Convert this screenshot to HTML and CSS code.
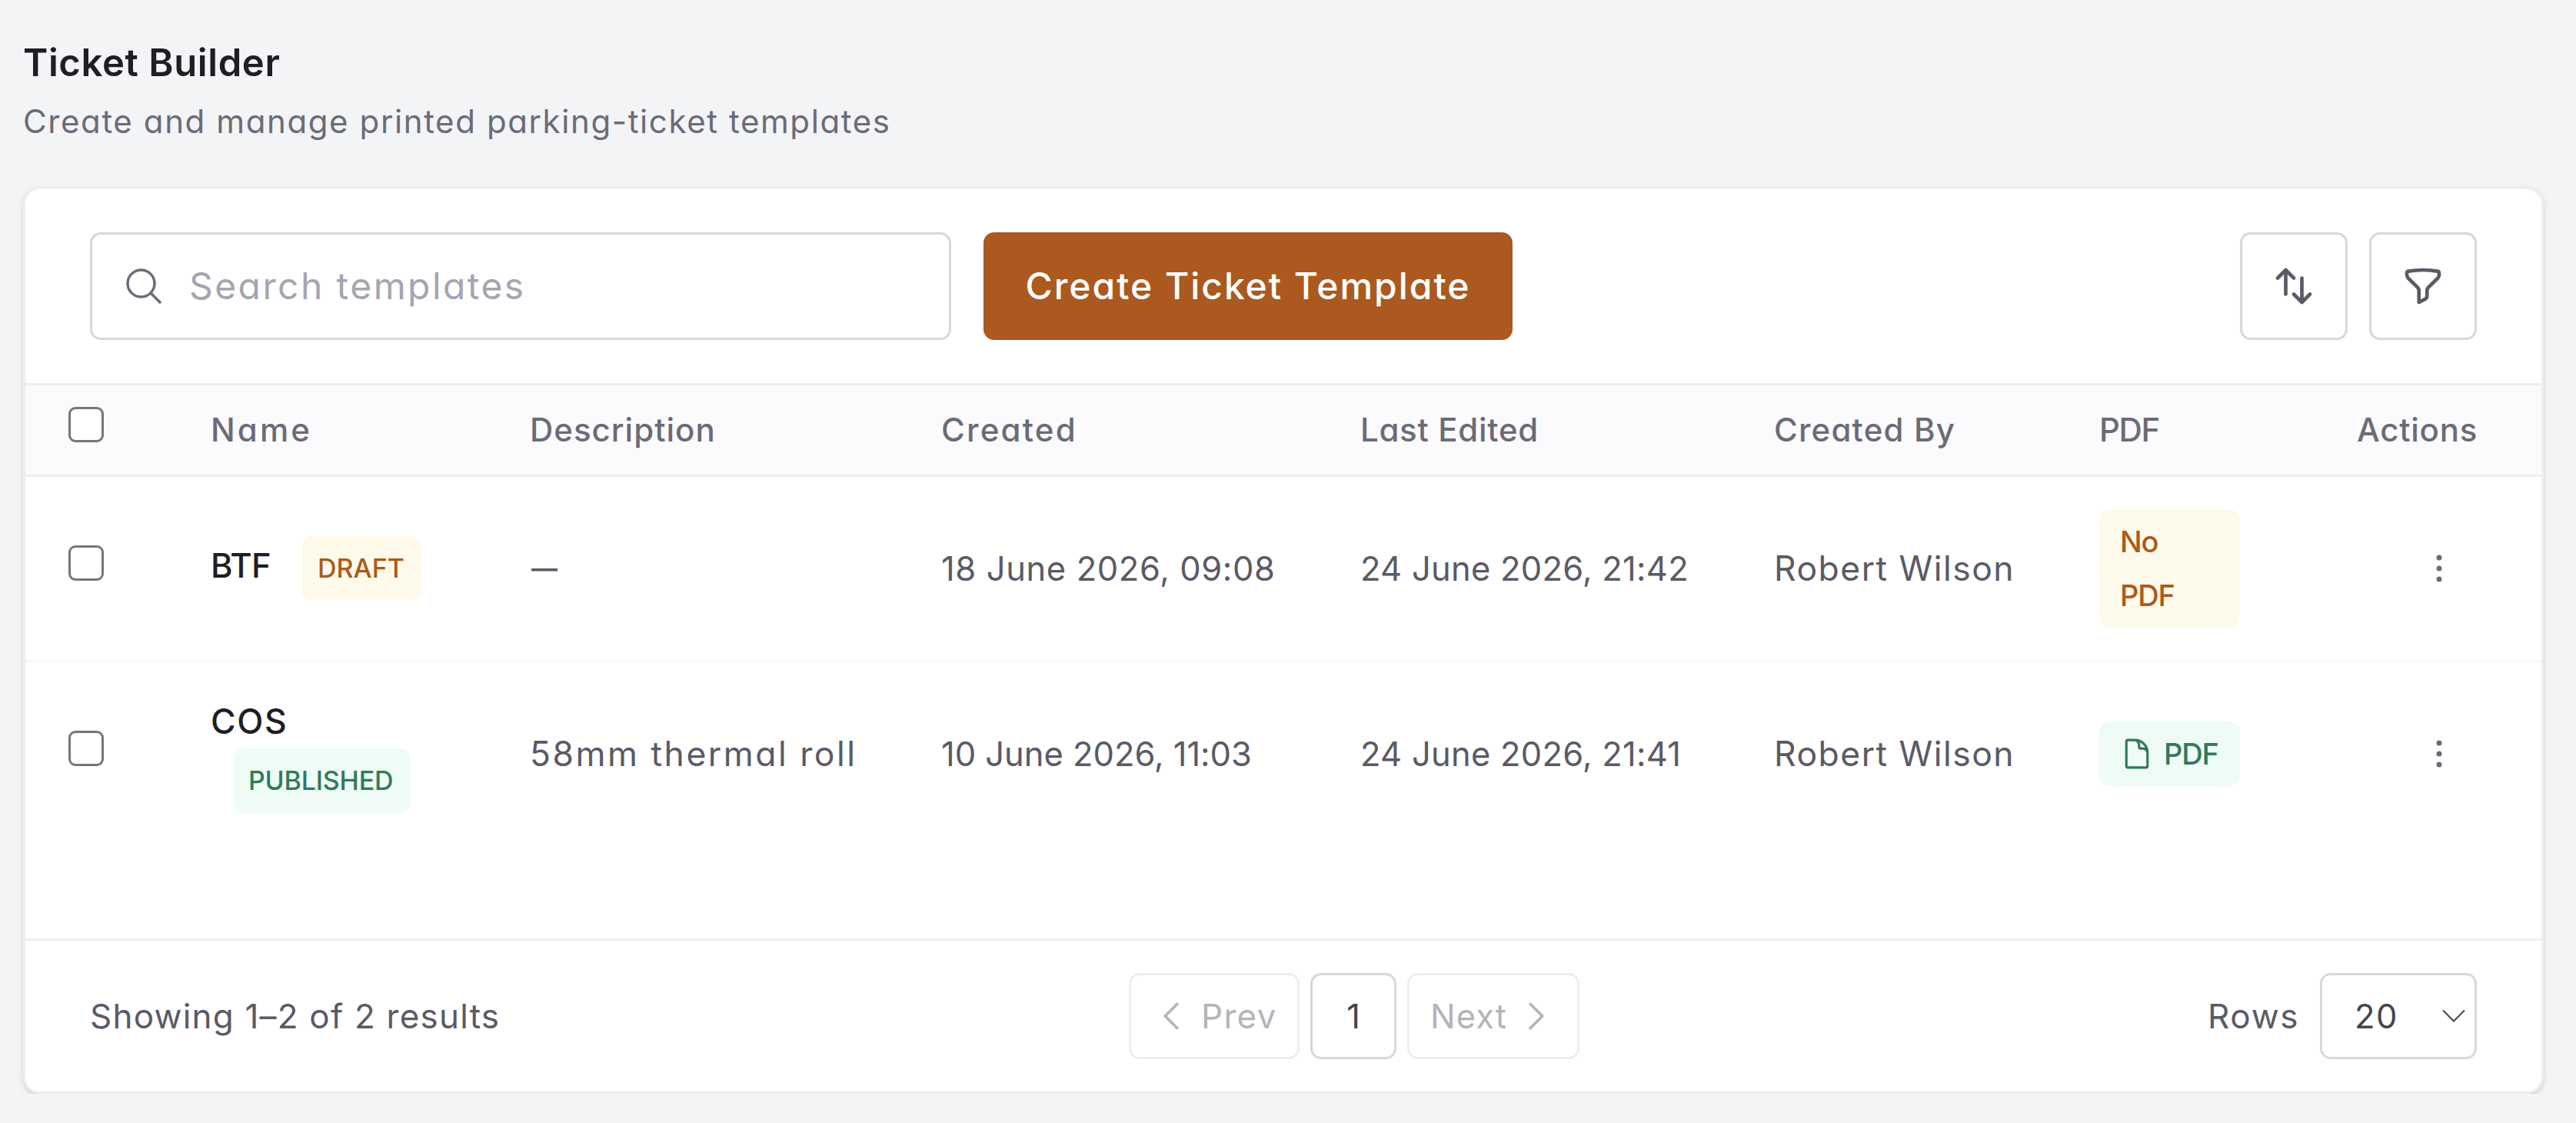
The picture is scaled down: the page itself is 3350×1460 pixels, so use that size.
FILE: index.html
```html
<!DOCTYPE html>
<html lang="en">
<head>
<meta charset="utf-8">
<title>Ticket Builder</title>
<link rel="stylesheet" href="styles.css">
</head>
<body>
<main class="page">
  <header class="page-header">
    <h1 class="page-title">Ticket Builder</h1>
    <p class="page-subtitle">Create and manage printed parking-ticket templates</p>
  </header>

  <section class="card">
    <div class="toolbar">
      <div class="search">
        <svg class="icon search-icon" viewBox="0 0 24 24"><path d="m21 21-5.197-5.197m0 0A7.5 7.5 0 1 0 5.196 5.196a7.5 7.5 0 0 0 10.607 10.607Z"/></svg>
        <span class="search-placeholder">Search templates</span>
      </div>
      <button class="btn-primary">Create Ticket Template</button>
      <div class="toolbar-actions">
        <button class="btn-icon" aria-label="Sort"><svg class="icon icon-bold" viewBox="0 0 24 24"><path d="M3 7.5 7.5 3m0 0L12 7.5M7.5 3v13.5m13.5 0L16.5 21m0 0L12 16.5m4.5 4.5V7.5"/></svg></button>
        <button class="btn-icon" aria-label="Filter"><svg class="icon icon-bold" viewBox="0 0 24 24"><path d="M12 3c2.755 0 5.455.232 8.083.678.533.09.917.556.917 1.096v1.044a2.25 2.25 0 0 1-.659 1.591l-5.432 5.432a2.25 2.25 0 0 0-.659 1.591v2.927a2.25 2.25 0 0 1-1.244 2.013L9.75 21v-6.568a2.25 2.25 0 0 0-.659-1.591L3.659 7.409A2.25 2.25 0 0 1 3 5.818V4.774c0-.54.384-1.006.917-1.096A48.32 48.32 0 0 1 12 3Z"/></svg></button>
      </div>
    </div>

    <div class="table-wrap">
      <table class="table">
        <colgroup>
          <col class="col-check"><col class="col-name"><col class="col-desc"><col class="col-created"><col class="col-edited"><col class="col-by"><col class="col-pdf"><col class="col-actions">
        </colgroup>
        <thead>
          <tr>
            <th class="check-cell"><span class="checkbox"></span></th>
            <th class="th-name">Name</th>
            <th class="th-desc">Description</th>
            <th class="th-created">Created</th>
            <th class="th-edited">Last Edited</th>
            <th class="th-by">Created By</th>
            <th class="th-pdf">PDF</th>
            <th class="th-actions">Actions</th>
          </tr>
        </thead>
        <tbody>
          <tr>
            <td class="check-cell"><span class="checkbox"></span></td>
            <td><div class="name-inline"><span class="name name-btf">BTF</span><span class="badge badge-amber">DRAFT</span></div></td>
            <td><span class="dash">—</span></td>
            <td class="date-a">18 June 2026, 09:08</td>
            <td class="date-b">24 June 2026, 21:42</td>
            <td class="person">Robert Wilson</td>
            <td><span class="pdf pdf-missing">No<br>PDF</span></td>
            <td class="actions-cell"><svg class="dots" viewBox="0 0 24 24"><circle cx="12" cy="6" r="1.5"/><circle cx="12" cy="12" r="1.5"/><circle cx="12" cy="18" r="1.5"/></svg></td>
          </tr>
          <tr>
            <td class="check-cell"><span class="checkbox"></span></td>
            <td><div class="name-stacked"><span class="name name-cos">COS</span><span class="badge badge-green">PUBLISHED</span></div></td>
            <td class="desc">58mm thermal roll</td>
            <td class="date-c">10 June 2026, 11:03</td>
            <td class="date-b">24 June 2026, 21:41</td>
            <td class="person">Robert Wilson</td>
            <td><span class="pdf pdf-ready"><svg class="icon doc-icon" viewBox="0 0 24 24"><path d="M19.5 14.25v-2.625a3.375 3.375 0 0 0-3.375-3.375h-1.5A1.125 1.125 0 0 1 13.5 7.125v-1.5a3.375 3.375 0 0 0-3.375-3.375H8.25m2.25 0H5.625c-.621 0-1.125.504-1.125 1.125v17.25c0 .621.504 1.125 1.125 1.125h12.75c.621 0 1.125-.504 1.125-1.125V11.25a9 9 0 0 0-9-9Z"/></svg>PDF</span></td>
            <td class="actions-cell"><svg class="dots" viewBox="0 0 24 24"><circle cx="12" cy="6" r="1.5"/><circle cx="12" cy="12" r="1.5"/><circle cx="12" cy="18" r="1.5"/></svg></td>
          </tr>
        </tbody>
      </table>
    </div>

    <footer class="footer">
      <div class="summary">Showing 1–2 of 2 results</div>
      <nav class="pager">
        <span class="page-btn page-prev"><svg class="icon chevron" viewBox="0 0 24 24"><path d="M15.75 19.5 8.25 12l7.5-7.5"/></svg>Prev</span>
        <span class="page-btn page-current">1</span>
        <span class="page-btn page-next">Next<svg class="icon chevron" viewBox="0 0 24 24"><path d="m8.25 4.5 7.5 7.5-7.5 7.5"/></svg></span>
      </nav>
      <div class="rows">
        <span class="rows-label">Rows</span>
        <span class="select">20<svg class="caret" viewBox="0 0 30 18"><path d="M1 1.5 15 15.5 29 1.5"/></svg></span>
      </div>
    </footer>
  </section>
</main>
</body>
</html>
```
FILE: styles.css
```css
* {
  box-sizing: border-box;
}

body {
  margin: 0;
  background: #f3f4f6;
  color: #5a5a66;
  font-family: Inter, "Open Sans", sans-serif;
  font-feature-settings: "cv11";
  font-size: 43.5px;
  line-height: 70px;
}

button {
  font: inherit;
  font-feature-settings: inherit;
  padding: 0;
  border: 0;
}

.icon {
  flex: none;
  width: 56px;
  height: 56px;
  fill: none;
  stroke: currentColor;
  stroke-width: 1.5;
  stroke-linecap: round;
  stroke-linejoin: round;
}

.icon-bold {
  stroke-width: 2;
}

.page {
  padding: 47px 42px 0 30px;
}

.page-header {
  height: 196px;
}

.page-title {
  margin: 0;
  color: #1e1e24;
  font-size: 49px;
  font-weight: 600;
  line-height: 70px;
  letter-spacing: 0.6px;
}

.page-subtitle {
  margin: 9px 0 0;
  color: #6b6b78;
  font-size: 42px;
  line-height: 64px;
  letter-spacing: 1.6px;
}

.card {
  width: 3278px;
  height: 1179px;
  display: flex;
  flex-direction: column;
  background: #fff;
  border: 3px solid #eeeef1;
  border-radius: 22px;
  box-shadow: 0 3px 8px rgba(0, 0, 0, 0.11), 0 3px 6px -3px rgba(0, 0, 0, 0.14);
  overflow: hidden;
}

.toolbar {
  display: flex;
  align-items: center;
  gap: 42px;
  padding: 56px 84px;
  border-bottom: 3px solid #eeeef1;
}

.search {
  display: flex;
  align-items: center;
  gap: 31px;
  width: 1120px;
  height: 140px;
  padding-left: 39px;
  border: 3px solid #d7d7dc;
  border-radius: 14px;
  color: #6b6b78;
}

.search-placeholder {
  color: #a5a5b0;
  font-size: 48px;
  letter-spacing: 2.41px;
}

.btn-primary {
  width: 688px;
  height: 140px;
  border-radius: 14px;
  background: #ab591e;
  color: #fff;
  font-size: 48px;
  font-weight: 500;
  letter-spacing: 1.96px;
}

.toolbar-actions {
  display: flex;
  gap: 28px;
  margin-left: auto;
}

.btn-icon {
  display: flex;
  align-items: center;
  justify-content: center;
  width: 140px;
  height: 140px;
  background: #fff;
  border: 3px solid #d7d7dc;
  border-radius: 14px;
  color: #5a5a66;
}

.table-wrap {
  flex: 1;
}

.table {
  width: 3272px;
  table-layout: fixed;
  border-collapse: separate;
  border-spacing: 0;
}

.col-check { width: 241px; }
.col-name { width: 415px; }
.col-desc { width: 535px; }
.col-created { width: 545px; }
.col-edited { width: 538px; }
.col-by { width: 423px; }
.col-pdf { width: 184px; }
.col-actions { width: 391px; }

th,
td {
  padding: 0;
  text-align: left;
  vertical-align: middle;
  white-space: nowrap;
}

th {
  height: 119px;
  background: #fbfbfd;
  border-bottom: 3px solid #eeeef1;
  color: #6b6b78;
  font-size: 42px;
  font-weight: 500;
}

td {
  height: 241px;
  border-bottom: 3px solid #f8f8f9;
}

tbody tr:last-child td {
  height: 238px;
  border-bottom: 0;
}

.check-cell {
  padding: 0 0 15px 56px;
}

.checkbox {
  display: block;
  width: 46px;
  height: 46px;
  background: #fff;
  border: 3px solid #767676;
  border-radius: 9px;
}

.th-name { letter-spacing: 3.1px; }
.th-desc { letter-spacing: 1px; }
.th-created { letter-spacing: 2.2px; }
.th-edited { letter-spacing: 0.7px; }
.th-by { letter-spacing: 1.18px; }
.th-pdf { letter-spacing: -1.4px; }

.th-actions {
  padding-right: 83px;
  text-align: right;
  letter-spacing: 0.73px;
}

.name {
  color: #1e1e24;
  font-weight: 500;
}

.name-btf {
  width: 118px;
  letter-spacing: -0.75px;
}

.name-cos {
  font-size: 44.5px;
  letter-spacing: 1.6px;
}

.name-inline {
  display: flex;
  align-items: baseline;
}

.name-stacked {
  display: flex;
  flex-direction: column;
  align-items: flex-start;
}

.name-stacked .badge {
  margin-left: 30px;
}

.badge {
  height: 84px;
  padding: 0 21px;
  border-radius: 14px;
  font-size: 34px;
  font-weight: 500;
  line-height: 84px;
}

.badge-amber {
  width: 156px;
  background: #fefaeb;
  color: #ab5a18;
}

.badge-green {
  width: 230px;
  padding-left: 19px;
  background: #eefcf5;
  color: #2f7a5b;
  letter-spacing: -0.2px;
}

.dash {
  position: relative;
  top: -2px;
  padding-left: 2px;
  font-size: 34px;
  font-weight: 600;
}

.desc {
  font-size: 44.5px;
  letter-spacing: 2.5px;
}

.date-a { letter-spacing: 0.62px; }
.date-b { letter-spacing: 0.25px; }
.date-c { letter-spacing: -0.02px; }

.person {
  font-size: 44.5px;
  letter-spacing: 1.45px;
}

.pdf {
  display: flex;
  align-items: center;
  width: 183px;
  border-radius: 14px;
  font-size: 38px;
  font-weight: 500;
  letter-spacing: -1.2px;
}

.pdf-missing {
  height: 154px;
  padding-left: 27px;
  background: #fefaeb;
  color: #ab5a18;
}

.pdf-ready {
  height: 84px;
  padding-left: 27px;
  gap: 13px;
  background: #eefcf5;
  color: #2f7a5b;
}

.doc-icon {
  width: 44px;
  height: 44px;
  stroke-width: 1.7;
}

.actions-cell {
  padding-right: 105px;
}

.dots {
  display: block;
  width: 56px;
  height: 56px;
  margin-left: auto;
  fill: #6b6b78;
}

.footer {
  display: flex;
  align-items: center;
  justify-content: space-between;
  height: 199px;
  padding: 0 84px;
  border-top: 3px solid #eeeef0;
}

.summary {
  width: 534px;
  font-size: 44px;
  letter-spacing: 1.2px;
  white-space: nowrap;
}

.pager {
  display: flex;
  gap: 14px;
}

.page-btn {
  display: flex;
  align-items: center;
  height: 112px;
  border: 3px solid #eeeef1;
  border-radius: 14px;
  color: #b4b4ba;
}

.page-prev {
  width: 222px;
  padding-left: 27px;
  gap: 14px;
  font-size: 44px;
  letter-spacing: 1.3px;
}

.page-current {
  justify-content: center;
  width: 112px;
  border-color: #d7d7dc;
  color: #454550;
}

.page-next {
  width: 224px;
  padding-left: 27px;
  gap: 13px;
  letter-spacing: 1px;
}

.chevron {
  width: 50px;
  height: 50px;
  stroke-width: 1.7;
}

.rows {
  display: flex;
  align-items: center;
  justify-content: space-between;
  width: 350px;
}

.rows-label {
  font-size: 44px;
  letter-spacing: 1.7px;
}

.select {
  display: flex;
  align-items: center;
  justify-content: space-between;
  width: 204px;
  height: 112px;
  padding: 0 12px 0 42px;
  border: 3px solid #d7d8dd;
  border-radius: 14px;
  color: #454550;
  letter-spacing: 1.5px;
}

.caret {
  width: 30px;
  height: 18px;
  fill: none;
  stroke: currentColor;
  stroke-width: 2;
}
```
